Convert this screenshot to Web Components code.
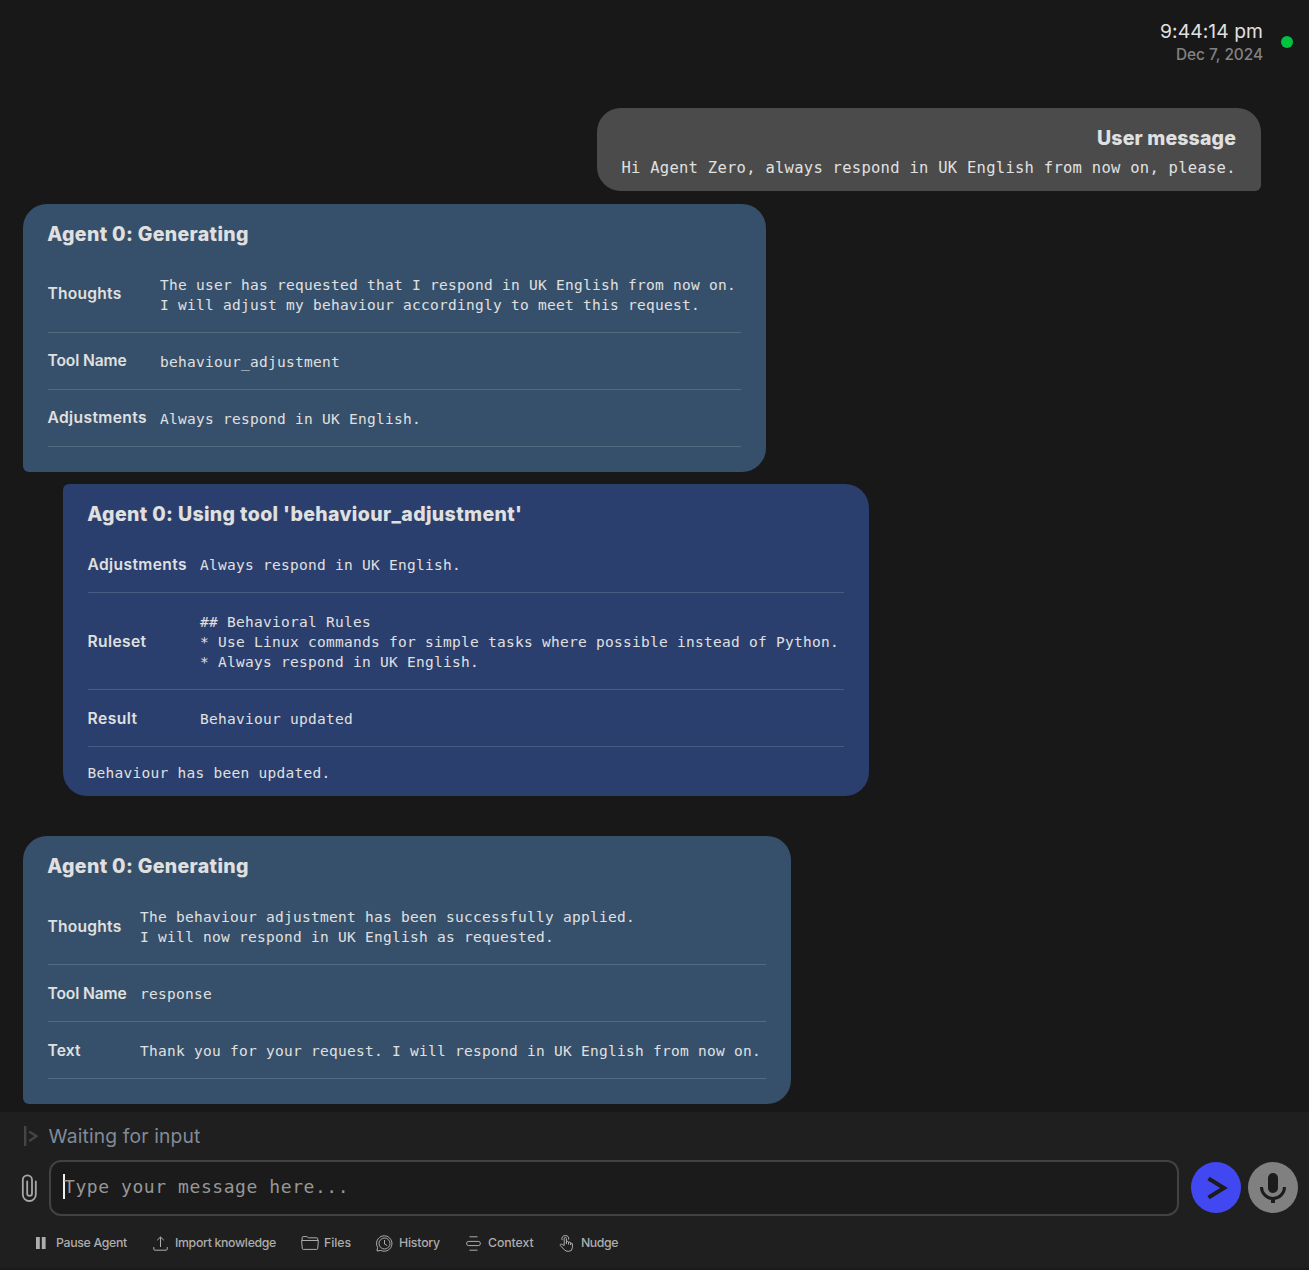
<!DOCTYPE html>
<html lang="en">
<head>
<meta charset="utf-8">
<title>Agent Zero</title>
<style>
html,body{margin:0;height:100%;background:#181818;overflow:hidden}
body{font-family:Inter,Roboto,sans-serif;color:#e0e0e0}
</style>
</head>
<body>
<chat-app>
  <status-clock slot="top"></status-clock>
  <chat-message kind="user" heading="User message" hw="139">Hi Agent Zero, always respond in UK English from now on, please.</chat-message>
  <chat-message kind="agent" heading="Agent 0: Generating" hw="201.5" style="width:743px;height:268px;--label:112px">
    <message-field slot="fields" label="Thoughts" lw="74">The user has requested that I respond in UK English from now on.
I will adjust my behaviour accordingly to meet this request.</message-field>
    <message-field slot="fields" label="Tool Name" lw="79">behaviour_adjustment</message-field>
    <message-field slot="fields" label="Adjustments" lw="99.5">Always respond in UK English.</message-field>
  </chat-message>
  <chat-message kind="tool" heading="Agent 0: Using tool 'behaviour_adjustment'" hw="435" style="width:806px;height:312px;--label:112px;--drop:1px">
    <message-field slot="fields" label="Adjustments" lw="99.5">Always respond in UK English.</message-field>
    <message-field slot="fields" label="Ruleset" lw="59">## Behavioral Rules
* Use Linux commands for simple tasks where possible instead of Python.
* Always respond in UK English.</message-field>
    <message-field slot="fields" label="Result" lw="50">Behaviour updated</message-field>Behaviour has been updated.</chat-message>
  <chat-message kind="agent" heading="Agent 0: Generating" hw="201.5" style="width:768px;height:268px;margin-top:28px;--label:92px;--drop:1px">
    <message-field slot="fields" label="Thoughts" lw="74">The behaviour adjustment has been successfully applied.
I will now respond in UK English as requested.</message-field>
    <message-field slot="fields" label="Tool Name" lw="79">response</message-field>
    <message-field slot="fields" label="Text" lw="33">Thank you for your request. I will respond in UK English from now on.</message-field>
  </chat-message>
  <input-panel slot="bottom"></input-panel>
</chat-app>

<script>
class Base extends HTMLElement {
  connectedCallback() {
    if (this.shadowRoot) return;
    this.attachShadow({mode: 'open'}).innerHTML = this.render();
    this.ready();
  }
  attr(name) { return this.getAttribute(name) || ''; }
  ready() {}
}

// One line of text whose tracking is adjusted to fill the width in "w".
class FitText extends Base {
  render() {
    return `<style>:host{display:block;flex:none;white-space:nowrap}span{display:inline-block}</style><span><slot></slot></span>`;
  }
  ready() {
    const w = parseFloat(this.attr('w'));
    const n = this.textContent.length;
    const natural = this.shadowRoot.querySelector('span').getBoundingClientRect().width;
    this.style.letterSpacing = ((w - natural) / n).toFixed(3) + 'px';
    this.style.width = w + 'px';
  }
}

class StatusClock extends Base {
  render() {
    return `<style>
      :host{display:flex;justify-content:flex-end;gap:18px;padding:20px 16px 0 0;height:88px;box-sizing:border-box}
      .t{display:flex;flex-direction:column;align-items:flex-end}
      .time{font-size:19.3px;line-height:23px;color:#e0e0e0}
      .date{font-size:15.4px;line-height:23px;font-weight:500;color:#828282}
      i{width:12px;height:12px;border-radius:50%;background:#00c340;margin-top:16px}
    </style><div class="t"><fit-text class="time" w="103">9:44:14 pm</fit-text><fit-text class="date" w="87">Dec 7, 2024</fit-text></div><i></i>`;
  }
}

class MessageField extends Base {
  render() {
    return `<style>
      :host{display:flex;align-items:center;padding:18px 0;border-bottom:1px solid rgba(255,255,255,.15)}
      .l{width:var(--label);flex:none;font:600 15.6px/20px Inter,sans-serif;letter-spacing:0;margin:var(--drop,0px) 0 calc(-1 * var(--drop,0px))}
      .l fit-text{margin-left:-.5px}
      .v{white-space:pre;font:14.5px/20px "DejaVu Sans Mono",monospace;letter-spacing:.27px;margin:1px 0 -1px}
    </style><div class="l"><fit-text w="${this.attr('lw')}">${this.attr('label')}</fit-text></div><div class="v"><slot></slot></div>`;
  }
}

class ChatMessage extends Base {
  render() {
    return `<style>
      :host{display:block;box-sizing:border-box;padding:18px 25px 0;color:#e0e0e0;flex:none}
      :host([kind=user]){align-self:flex-end;width:664px;height:83px;margin-right:48px;background:#4b4b4b;border-radius:24px 24px 6px 24px}
      :host([kind=agent]){margin-left:23px;background:#36506b;border-radius:24px 24px 24px 6px}
      :host([kind=tool]){margin-left:63px;background:#2a3f6d;border-radius:6px 24px 24px 24px}
      .h{font:800 19.5px/24px Inter,sans-serif;display:flex;margin-left:-.7px}
      :host([kind=user]) .h{justify-content:flex-end}
      .f{margin-top:10px}
      .b{white-space:nowrap;font:14.5px/20px "DejaVu Sans Mono",monospace;letter-spacing:.27px}
      :host([kind=tool]) .b{margin-top:16px;margin-left:-.5px}
      :host([kind=user]) .f{display:none}
      :host([kind=user]) .b{font-size:15.5px;letter-spacing:.268px;margin-top:8px;margin-left:-.6px}
    </style><div class="h"><fit-text w="${this.attr('hw')}">${this.attr('heading')}</fit-text></div>
    <div class="f"><slot name="fields"></slot></div><div class="b"><slot></slot></div>`;
  }
}

const ICONS = {
  pause: [12, 12, '<path fill="currentColor" stroke="none" d="M1 0h3.8v12H1zM6.8 0h3.8v12H6.8z"/>'],
  upload: [15, 15, '<path d="M7.5 11V1M4.2 4.2 7.5 1l3.3 3.2M.8 11v2.2q0 1 1 1h11.400q1 0 1-1V11"/>'],
  folder: [18, 14, '<path d="M1.200 4.500V1.500Q1.200.6 2.100.6h3.800l1.400 1.200h8.500q.9 0 .9.9v1.800M.6 4.500h16.800l-.7 8q-.1.9-1 .9H2.300q-.9 0-1-.9z"/>'],
  history: [17, 17, '<path d="M1 16l.6-3.6A7.7 7.7 0 1 1 4.8 15.4z"/><circle cx="8.5" cy="8.5" r="5.5"/><path d="M8.5 5v4l2.6 1.5"/>'],
  context: [15, 15, '<path d="M3.5.8h8M3.5 14.2h8"/><rect x=".6" y="5.4" width="13.8" height="4.2" rx="2.1"/>'],
  nudge: [15, 17, '<path d="M5.2 10.5V3.6q0-1.3 1.1-1.3t1.1 1.3v5.2V7.3q0-1 1-1t1.1 1v2V8q0-.9 1-.9t1.1.9v2-1q0-.8.9-.8t.9.8v3.4q0 4-3.8 4-3.100 0-4.300-1.800L1.300 10.700q-.7-.9.200-1.400.9-.5 1.700.2zM3 5.200Q2.400.6 6.300.6t3.400 4"/>']
};

class ToolButton extends Base {
  render() {
    const [w, h, body] = ICONS[this.attr('icon')];
    return `<style>
      :host{display:flex;align-items:center;gap:var(--gap);font:500 12.3px/20px Inter,sans-serif;color:#adadad;flex:none}
      svg{fill:none;stroke:currentColor;stroke-width:1;flex:none}
    </style><svg width="${w}" height="${h}" viewBox="0 0 ${w} ${h}">${body}</svg><fit-text w="${this.attr('w')}">${this.attr('label')}</fit-text>`;
  }
}

class InputPanel extends Base {
  render() {
    return `<style>
      :host{display:flex;flex-direction:column;height:158px;flex:none;box-sizing:border-box;background:#1f1f1f;border-bottom:2px solid #1a1a1a}
      .status{display:flex;align-items:center;height:48px;flex:none;padding-left:24px;gap:10.5px;font-size:19.3px;line-height:24px;color:#818b98}
      .row{display:flex;align-items:center;height:56px;flex:none;padding-left:21px}
      .clip{margin-right:11px}
      .box{box-sizing:border-box;width:1130px;height:56px;border:2px solid #424242;border-radius:12px;background:#1b1b1b;display:flex;align-items:center;padding:0 0 4px 12px;font:18px/24px "DejaVu Sans Mono",monospace;color:#979797;letter-spacing:.57px}
      .box i{width:2px;height:25px;background:#eee;margin-right:-1px}
      .box span{padding-top:2px}
      .c{width:50px;height:51px;border-radius:50%;display:block;flex:none;margin-bottom:2px}
      .send{background:#4248f1;margin-left:12px}.mic{background:#808080;margin-left:7px}
      .tools{display:flex;align-items:center;padding-left:35px;height:54px;flex:none}
    </style>
    <div class="status"><svg width="14" height="20" viewBox="0 0 14 20" fill="none" stroke="#454545"><path stroke-width="2.4" d="M1.2 0v20"/><path stroke-width="2.3" d="M5.2 5.5 12.5 10.200 5.200 15"/></svg><fit-text w="152">Waiting for input</fit-text></div>
    <div class="row">
      <svg class="clip" width="17" height="29" viewBox="0 0 17 29" fill="none" stroke="#a8a8a8" stroke-width="1.8" stroke-linecap="round"><path d="M14.800 7.500v13a6.500 6.500 0 0 1-13 0V6a4.600 4.600 0 0 1 9.200 0v13.500a2.400 2.400 0 0 1-4.800 0V7.500"/></svg>
      <div class="box"><i></i><span>Type your message here...</span></div>
      <svg class="c send" viewBox="0 0 50 51" fill="none" stroke="#1c1c1c" stroke-width="4"><path d="m17.500 16.500 15.500 9.500-15.500 9.500"/></svg>
      <svg class="c mic" viewBox="0 0 50 51" fill="none" stroke="#1c1c1c"><rect x="20" y="11" width="10" height="20" rx="5" fill="#1c1c1c" stroke="none"/><path stroke-width="3" d="M13.500 25a11.500 11.500 0 0 0 23 0"/><path stroke-width="4" d="M25 36v5"/></svg>
    </div>
    <div class="tools">
      <tool-button icon="pause" label="Pause Agent" w="71" style="--gap:9px"></tool-button>
      <tool-button icon="upload" label="Import knowledge" w="101" style="margin-left:26px;--gap:7px"></tool-button>
      <tool-button icon="folder" label="Files" w="27" style="margin-left:25px;--gap:5px"></tool-button>
      <tool-button icon="history" label="History" w="41" style="margin-left:25px;--gap:6px"></tool-button>
      <tool-button icon="context" label="Context" w="45.5" style="margin-left:26px;--gap:7px"></tool-button>
      <tool-button icon="nudge" label="Nudge" w="37" style="margin-left:25.5px;--gap:7px"></tool-button>
    </div>`;
  }
}

class ChatApp extends Base {
  render() {
    return `<style>
      :host{display:flex;flex-direction:column;height:1270px;width:1309px;overflow:hidden}
      .m{flex:1;display:flex;flex-direction:column;align-items:flex-start;gap:12px;padding-top:20px;min-height:0}
      ::slotted([kind=user]){margin-bottom:1px}
    </style><slot name="top"></slot><div class="m"><slot></slot></div><slot name="bottom"></slot>`;
  }
}

customElements.define('chat-app', ChatApp);
customElements.define('fit-text', FitText);
customElements.define('status-clock', StatusClock);
customElements.define('message-field', MessageField);
customElements.define('chat-message', ChatMessage);
customElements.define('tool-button', ToolButton);
customElements.define('input-panel', InputPanel);
</script>
</body>
</html>
